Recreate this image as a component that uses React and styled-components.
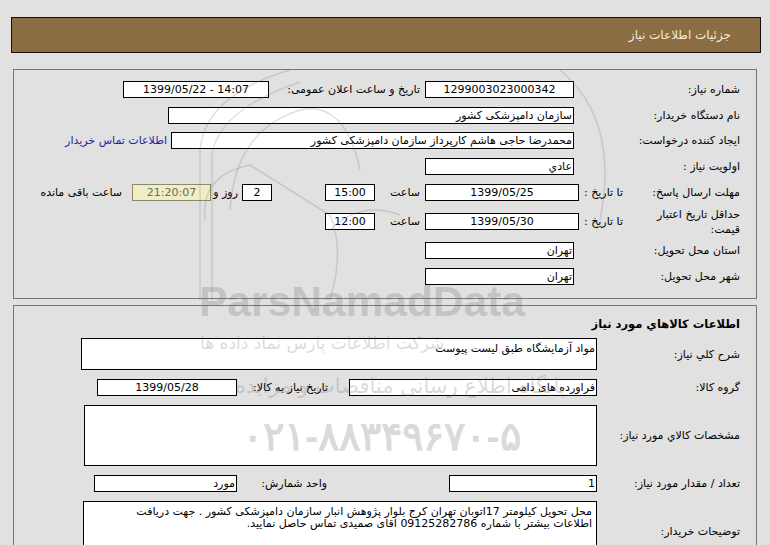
import React from "react";
import styled, { createGlobalStyle } from "styled-components";

const GlobalStyle = createGlobalStyle`
  html, body {
    margin: 0;
    padding: 0;
    background: #e1e1e1;
  }
  body {
    font-family: "DejaVu Sans", Tahoma, sans-serif;
    font-size: 11px;
    color: #000;
  }
`;

const Page = styled.div`
  position: relative;
  width: 770px;
  height: 545px;
  overflow: hidden;
  padding-top: 17px;
  box-sizing: border-box;
`;

const Header = styled.div`
  margin-left: 11px;
  width: 750px;
  height: 36px;
  box-sizing: border-box;
  background: #8c6c42;
  border: 1px solid #111;
  display: flex;
  align-items: center;
  direction: rtl;
  padding-right: 29px;
`;

const HeaderTitle = styled.span`
  color: #f3ecd6;
  font-size: 12px;
`;

const Panel = styled.div`
  margin-left: 13px;
  margin-top: ${(p) => p.$mt}px;
  width: 744px;
  box-sizing: border-box;
  border: 1px solid #777;
  direction: rtl;
  padding: 6px 16px ${(p) => p.$pb}px 0;
  display: flex;
  flex-direction: column;
`;

const Row = styled.div`
  height: ${(p) => p.$h}px;
  display: flex;
  align-items: center;
`;

const Label = styled.div`
  flex: none;
  width: ${(p) => (p.$w ? `${p.$w}px` : "auto")};
  margin-right: ${(p) => p.$gap || 0}px;
  padding-right: ${(p) => p.$pr || 0}px;
  box-sizing: border-box;
  text-align: right;
  white-space: nowrap;
  line-height: 15px;
`;

const Title = styled.div`
  font-weight: bold;
  font-size: 11.5px;
`;

const Field = styled.div`
  flex: none;
  width: ${(p) => p.$w}px;
  height: 17px;
  margin-right: ${(p) => p.$gap || 0}px;
  box-sizing: border-box;
  border: 1px solid #000;
  background: #fff;
  padding: ${(p) => (p.$center ? "0" : "0 1px")};
  text-align: ${(p) => (p.$center ? "center" : "right")};
  line-height: 15px;
  white-space: nowrap;
  overflow: hidden;
  direction: ${(p) => (p.$ltr ? "ltr" : "rtl")};
`;

const Remain = styled(Field)`
  background: #efeec7;
  border-color: #8a8a70;
  color: #6b6b50;
`;

const Note = styled.div`
  flex: none;
  width: ${(p) => p.$w}px;
  height: ${(p) => p.$hh}px;
  box-sizing: border-box;
  border: 1px solid #000;
  background: #fff;
  padding: ${(p) => p.$pad};
  line-height: ${(p) => p.$lh || 15}px;
  text-align: right;
  white-space: nowrap;
`;

const Link = styled.a`
  margin-right: 4px;
  color: #1f1fa3;
  text-decoration: none;
  white-space: nowrap;
`;

const Watermark = styled.div`
  position: absolute;
  inset: 0;
  pointer-events: none;
  color: rgba(110, 110, 110, 0.26);
`;

const WmText = styled.div`
  position: absolute;
  left: ${(p) => p.$x}px;
  top: ${(p) => p.$y}px;
  font-family: ${(p) => (p.$latin ? '"Liberation Sans", Arial, sans-serif' : '"DejaVu Sans", sans-serif')};
  font-size: ${(p) => p.$size}px;
  font-weight: ${(p) => (p.$bold ? "bold" : "normal")};
  white-space: nowrap;
  direction: ${(p) => (p.$latin ? "ltr" : "rtl")};
`;

const WmDrawing = styled.svg`
  position: absolute;
  left: 0;
  top: 0;
`;

export default function App() {
  return (
    <>
      <GlobalStyle />
      <Page>
        <Header>
          <HeaderTitle>جزئیات اطلاعات نیاز</HeaderTitle>
        </Header>

        <Panel $mt={16} $pb={9}>
          <Row $h={26}>
            <Label $w={166}>شماره نیاز:</Label>
            <Field $w={149} $center $ltr>1299003023000342</Field>
            <Label $w={156} $pr={5}>تاریخ و ساعت اعلان عمومی:</Label>
            <Field $w={146} $center $ltr>1399/05/22 - 14:07</Field>
          </Row>
          <Row $h={26}>
            <Label $w={166}>نام دستگاه خریدار:</Label>
            <Field $w={406}>سازمان دامپزشکی کشور</Field>
          </Row>
          <Row $h={25}>
            <Label $w={166}>ایجاد کننده درخواست:</Label>
            <Field $w={403}>محمدرضا حاجی هاشم کارپرداز سازمان دامپزشکی کشور</Field>
            <Link href="#">اطلاعات تماس خریدار</Link>
          </Row>
          <Row $h={26}>
            <Label $w={166}>اولویت نیاز :</Label>
            <Field $w={149}>عادي</Field>
          </Row>
          <Row $h={27}>
            <Label $w={113}>مهلت ارسال پاسخ:</Label>
            <Label $w={48} $pr={4}>تا تاریخ :</Label>
            <Field $w={154} $center $ltr>1399/05/25</Field>
            <Label $w={50} $pr={5}>ساعت</Label>
            <Field $w={50} $center $ltr>15:00</Field>
            <Field $w={30} $gap={53} $center $ltr>2</Field>
            <Label $w={31} $pr={4}>روز و</Label>
            <Remain $w={79} $center $ltr>21:20:07</Remain>
            <Label $gap={10}>ساعت باقی مانده</Label>
          </Row>
          <Row $h={31}>
            <Label $w={113}>
              حداقل تاریخ اعتبار
              <br />
              قیمت:
            </Label>
            <Label $w={48} $pr={4}>تا تاریخ :</Label>
            <Field $w={154} $center $ltr>1399/05/30</Field>
            <Label $w={50} $pr={5}>ساعت</Label>
            <Field $w={50} $center $ltr>12:00</Field>
          </Row>
          <Row $h={26}>
            <Label $w={166}>استان محل تحویل:</Label>
            <Field $w={149}>تهران</Field>
          </Row>
          <Row $h={26}>
            <Label $w={166}>شهر محل تحویل:</Label>
            <Field $w={149}>تهران</Field>
          </Row>
        </Panel>

        <Panel $mt={6} $pb={0}>
          <Row $h={24}>
            <Title>اطلاعات کالاهاي مورد نیاز</Title>
          </Row>
          <Row $h={36}>
            <Label $w={143}>شرح کلي نیاز:</Label>
            <Note $w={516} $hh={32} $pad="2px 1px 0">مواد آزمایشگاه طبق لیست پیوست</Note>
          </Row>
          <Row $h={31}>
            <Label $w={143}>گروه کالا:</Label>
            <Field $w={248}>فراورده های دامی</Field>
            <Label $w={112} $pr={21}>تاریخ نیاز به کالا:</Label>
            <Field $w={140} $center $ltr>1399/05/28</Field>
          </Row>
          <Row $h={65}>
            <Label $w={143}>مشخصات کالاي مورد نیاز:</Label>
            <Note $w={513} $hh={61} $pad="0" />
          </Row>
          <Row $h={31}>
            <Label $w={143}>تعداد / مقدار مورد نیاز:</Label>
            <Field $w={148}>1</Field>
            <Label $w={212} $pr={122}>واحد شمارش:</Label>
            <Field $w={143}>مورد</Field>
          </Row>
          <Row $h={64}>
            <Label $w={143}>توضیحات خریدار:</Label>
            <Note $w={514} $hh={60} $pad="4px 4px 0" $lh={12}>
              محل تحویل کیلومتر 17اتوبان تهران کرج بلوار پژوهش انبار سازمان دامپزشکی کشور . جهت دریافت
              <br />
              اطلاعات بیشتر با شماره 09125282786 اقای صمیدی تماس حاصل نمایید.
            </Note>
          </Row>
        </Panel>

        <Watermark>
          <WmDrawing width="770" height="545" viewBox="0 0 770 545">
            <g fill="none" stroke="rgba(110,110,110,0.22)" strokeWidth="1.5">
              <path d="M200 300 V150 Q205 95 290 70" />
              <path d="M212 300 V155 Q218 110 300 82" />
              <path d="M230 210 Q235 130 300 110 Q345 100 360 170" />
              <path d="M205 220 Q200 175 250 165 L330 215 Q345 250 330 300" />
              <path d="M330 230 Q360 200 400 215" />
              <path d="M560 70 Q620 120 600 220" />
            </g>
          </WmDrawing>
          <WmText $latin $bold $x={199} $y={278} $size={42.5}>ParsNamadData</WmText>
          <WmText $x={200} $y={333} $size={17}>شرکت اطلاعات پارس نماد داده ها</WmText>
          <WmText $x={235} $y={374} $size={21}>پایگاه اطلاع رسانی مناقصات و مزایده</WmText>
          <WmText $latin $bold $x={242} $y={413} $size={40}>۰۲۱-۸۸۳۴۹۶۷۰-۵</WmText>
        </Watermark>
      </Page>
    </>
  );
}
